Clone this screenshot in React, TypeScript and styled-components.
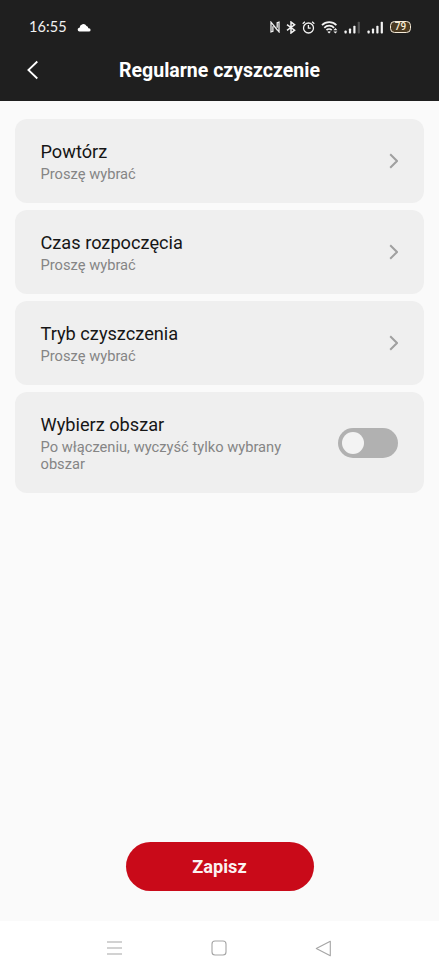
import React, { useState } from 'react';
import styled, { createGlobalStyle } from 'styled-components';

const GlobalStyle = createGlobalStyle`
  * { box-sizing: border-box; }
  body { margin: 0; background: #fafafa; font-family: Roboto, "Open Sans", sans-serif; }
  button { font: inherit; border: 0; padding: 0; background: none; color: inherit; cursor: pointer; }
  svg { display: block; flex: none; }
`;

const Screen = styled.div`
  display: flex;
  flex-direction: column;
  width: 100%;
  height: 100vh;
  background: #fafafa;
`;

const Header = styled.header`
  height: 101px;
  background: #1f1f1f;
  color: #fff;
`;

const StatusBar = styled.div`
  display: flex;
  align-items: center;
  height: 40px;
  padding: 14px 28px 0 29px;
  color: #f2f2f2;
`;

const Clock = styled.span`
  width: 48px;
  font-family: Lato, Roboto, sans-serif;
  font-size: 14.5px;
  line-height: 20px;
  letter-spacing: 0.1px;
`;

const StatusIcons = styled.div`
  display: flex;
  align-items: center;
  gap: 6px;
  margin-left: auto;
`;

const Signals = styled.div`
  display: flex;
  gap: 6px;
  margin-left: -1px;
`;

const Battery = styled.span`
  width: 21px;
  height: 12px;
  border: 1.5px solid #f4ead8;
  border-radius: 4.5px;
  background: #4a3a22;
  color: #f7ead4;
  font-size: 10px;
  font-weight: 500;
  line-height: 10px;
  text-align: center;
`;

const TitleBar = styled.div`
  display: grid;
  grid-template-columns: 60px 1fr 60px;
  align-items: center;
  height: 61px;
`;

const BackButton = styled.button`
  padding: 0 0 1px 26px;
`;

const Title = styled.h1`
  margin: 0;
  padding-top: 1px;
  font-size: 19.5px;
  font-weight: 700;
  line-height: 24px;
  text-align: center;
  white-space: nowrap;
`;

const Settings = styled.main`
  display: flex;
  flex: 1;
  flex-direction: column;
  gap: 7.5px;
  padding: 18.2px 15px 0 14.5px;
`;

const Card = styled.section<{ $tall?: boolean }>`
  display: flex;
  align-items: center;
  justify-content: space-between;
  height: ${({ $tall }) => ($tall ? 101 : 83.5)}px;
  padding: 0 26px;
  border-radius: 12px;
  background: #efefef;
`;

const CardText = styled.div`
  padding-top: 1px;
`;

const CardTitle = styled.div`
  color: #161616;
  font-size: 18.2px;
  line-height: 24px;
`;

const CardNote = styled.div`
  margin-top: 2px;
  max-width: 260px;
  color: #858585;
  font-size: 14.7px;
  line-height: 17px;
`;

const Switch = styled.button<{ $on: boolean }>`
  display: flex;
  align-items: center;
  justify-content: ${({ $on }) => ($on ? 'flex-end' : 'flex-start')};
  width: 60px;
  height: 30px;
  padding: 0 4px;
  border-radius: 15px;
  background: ${({ $on }) => ($on ? '#c90b19' : '#b1b1b1')};
`;

const Knob = styled.span`
  width: 22px;
  height: 22px;
  border-radius: 50%;
  background: #f3f3f3;
`;

const SaveArea = styled.footer`
  display: flex;
  justify-content: center;
  padding: 0 0 30.5px 0;
`;

const SaveButton = styled.button`
  width: 188px;
  height: 49px;
  padding-top: 1px;
  border-radius: 24.5px;
  background: #c90a19;
  color: #fbf1f1;
  font-size: 18.2px;
  font-weight: 700;
`;

const NavBar = styled.nav`
  display: flex;
  align-items: center;
  justify-content: space-between;
  height: 54px;
  padding: 0 107px 0 106px;
  background: #fff;
`;

const Chevron = () => (
  <svg width="9" height="16" viewBox="0 0 9 16" fill="none" stroke="#a0a0a0" strokeWidth="2">
    <path d="M1.2 1.2 8 8l-6.8 6.8" />
  </svg>
);

const CloudIcon = () => (
  <svg width="14" height="9" viewBox="0 0 14 9" fill="#fff">
    <path d="M2.4 8.6a2 2 0 0 1-.3-3.9h.5A3.7 3.7 0 0 1 9.5 3a2.2 2.2 0 0 1 1.8 2.2h.6a1.7 1.7 0 0 1 0 3.4z" />
  </svg>
);

const NfcIcon = () => (
  <svg width="10" height="12" viewBox="0 0 10 12" fill="none" stroke="#eee" strokeWidth="1.3">
    <path d="M2.9 5.2v5.1l-1.9.5V1.2L7.3 9M2.8 3.3 9 10.8V1.2l-1.8.5v5" />
  </svg>
);

const BluetoothIcon = () => (
  <svg width="10" height="13" viewBox="0 0 10 13" fill="none" stroke="#f2f2f2" strokeWidth="1.5">
    <path d="m1 3.6 7.6 5.6L5 12V1l3.6 2.8L1 9.4" />
  </svg>
);

const AlarmIcon = () => (
  <svg width="13" height="13" viewBox="0 0 13 13" fill="none" stroke="#f2f2f2" strokeWidth="1.3">
    <circle cx="6.5" cy="7" r="5" />
    <path d="M6.4 4v3.2h2.3M.7 2.8l2.2-2M12.3 2.8l-2.2-2" />
  </svg>
);

const WifiIcon = () => (
  <svg width="18" height="13" viewBox="0 0 18 13" fill="none" stroke="#f2f2f2" strokeWidth="1.7">
    <path d="M1 4.2a10.2 10.2 0 0 1 14.4 0M3.3 6.8a6.8 6.8 0 0 1 9.8 0M5.5 9.1a3.6 3.6 0 0 1 5.2 0" />
    <path d="m8.1 12.6-1.8-1.8q1.8-1.3 3.6 0z" fill="#f2f2f2" stroke="none" />
    <path d="m12.4 9.2 2-2.1 2 2.1zM12.4 10.4l2 2.1 2-2.1z" fill="#f2f2f2" stroke="none" />
  </svg>
);

const SignalIcon = ({ full }: { full: boolean }) => (
  <svg width="17" height="13" viewBox="0 0 17 13" fill="#f2f2f2">
    <rect x="0.5" y="9.5" width="2.2" height="3" rx="0.7" />
    <rect x="4.9" y="7.5" width="2.2" height="5" rx="0.7" />
    <rect x="9.3" y="4.8" width="2.2" height="7.7" rx="0.7" />
    <rect x="13.7" y="0.8" width="2.2" height="11.7" rx="0.7" opacity={full ? 1 : 0.25} />
  </svg>
);

const choices = ['Powtórz', 'Czas rozpoczęcia', 'Tryb czyszczenia'];

export default function App() {
  const [areaOnly, setAreaOnly] = useState(false);

  return (
    <Screen>
      <GlobalStyle />
      <Header>
        <StatusBar>
          <Clock>16:55</Clock>
          <CloudIcon />
          <StatusIcons>
            <NfcIcon />
            <BluetoothIcon />
            <AlarmIcon />
            <WifiIcon />
            <Signals>
              <SignalIcon full={false} />
              <SignalIcon full />
            </Signals>
            <Battery>79</Battery>
          </StatusIcons>
        </StatusBar>
        <TitleBar>
          <BackButton aria-label="Wstecz">
            <svg width="13" height="20" viewBox="0 0 13 20" fill="none" stroke="#fff" strokeWidth="1.8">
              <path d="M11.3 1.5 2.4 10l8.9 8.5" />
            </svg>
          </BackButton>
          <Title>Regularne czyszczenie</Title>
        </TitleBar>
      </Header>
      <Settings>
        {choices.map((name) => (
          <Card key={name}>
            <CardText>
              <CardTitle>{name}</CardTitle>
              <CardNote>Proszę wybrać</CardNote>
            </CardText>
            <Chevron />
          </Card>
        ))}
        <Card $tall>
          <CardText>
            <CardTitle>Wybierz obszar</CardTitle>
            <CardNote>Po włączeniu, wyczyść tylko wybrany obszar</CardNote>
          </CardText>
          <Switch
            $on={areaOnly}
            role="switch"
            aria-checked={areaOnly}
            aria-label="Wybierz obszar"
            onClick={() => setAreaOnly(!areaOnly)}
          >
            <Knob />
          </Switch>
        </Card>
      </Settings>
      <SaveArea>
        <SaveButton>Zapisz</SaveButton>
      </SaveArea>
      <NavBar>
        <svg width="17" height="16" viewBox="0 0 17 16" stroke="#a5a5a5" strokeWidth="1.1">
          <path d="M1 2h15M1 8h15M1 14h15" />
        </svg>
        <svg width="16" height="16" viewBox="0 0 16 16" fill="none" stroke="#a5a5a5" strokeWidth="1.1">
          <rect x="1" y="1" width="14" height="14" rx="3" />
        </svg>
        <svg width="17" height="17" viewBox="0 0 17 17" fill="none" stroke="#a5a5a5" strokeWidth="1.1" strokeLinejoin="round">
          <path d="M15.3 1.2v14.6L1.3 8.5z" />
        </svg>
      </NavBar>
    </Screen>
  );
}
